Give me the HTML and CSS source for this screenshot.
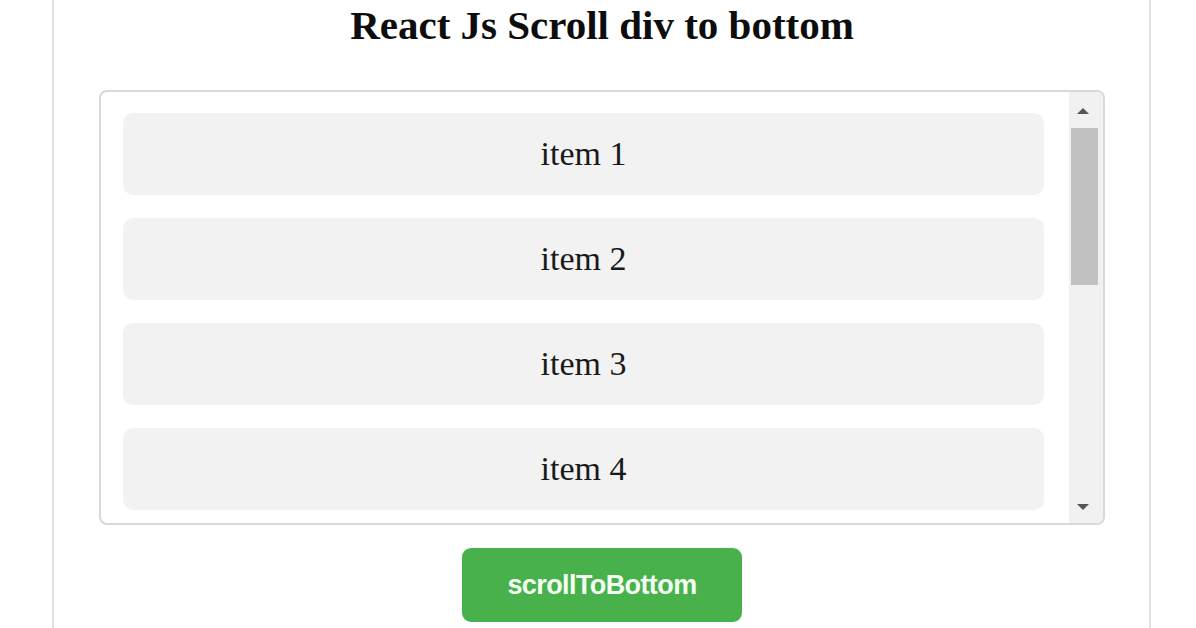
FILE: index.html
```html
<!DOCTYPE html>
<html lang="en">
<head>
<meta charset="utf-8">
<title>React Js Scroll div to bottom</title>
<link rel="stylesheet" href="styles.css">
</head>
<body>
<div class="page">
  <h1 class="title">React Js Scroll div to bottom</h1>
  <div class="scroll-box">
    <div class="list">
      <div class="item">item 1</div>
      <div class="item">item 2</div>
      <div class="item">item 3</div>
      <div class="item">item 4</div>
    </div>
    <div class="scrollbar">
      <span class="arrow up"></span>
      <div class="track"><div class="thumb"></div></div>
      <span class="arrow down"></span>
    </div>
  </div>
  <div class="actions">
    <button class="btn" type="button">scrollToBottom</button>
  </div>
</div>
</body>
</html>
```
FILE: styles.css
```css
html, body {
  margin: 0;
  padding: 0;
  background: #ffffff;
  height: 100%;
  overflow: hidden;
}

.page {
  margin-left: 52px;
  width: 1099px;
  box-sizing: border-box;
  min-height: 100%;
  border-left: 2px solid #e2e2e2;
  border-right: 2px solid #e2e2e2;
  padding: 2px 44px 0 45px;
  font-family: "Liberation Serif", "Times New Roman", serif;
  color: #111;
}

.title {
  margin: 0 0 42px;
  font-size: 41px;
  line-height: 46px;
  font-weight: bold;
  text-align: center;
  color: #0d0d0d;
}

.scroll-box {
  display: flex;
  height: 435px;
  box-sizing: border-box;
  border: 2px solid #d9d9d9;
  border-radius: 8px;
  overflow: hidden;
  background: #fff;
}

.list {
  flex: 1;
  overflow: hidden;
  padding: 21px 25px 0 22px;
  display: flex;
  flex-direction: column;
  gap: 23px;
}

.item {
  flex: none;
  height: 82px;
  border-radius: 10px;
  background: #f2f2f2;
  display: flex;
  align-items: center;
  justify-content: center;
  font-size: 34px;
  color: #1a1a1a;
}

/* drawn scrollbar: arrow buttons, track and thumb */
.scrollbar {
  flex: none;
  width: 34px;
  background: #f1f1f1;
  display: flex;
  flex-direction: column;
  align-items: flex-start;
}

.arrow {
  flex: none;
  width: 0;
  height: 0;
  margin-left: 8px;
  border-left: 6px solid transparent;
  border-right: 6px solid transparent;
}

.arrow.up {
  margin-top: 16px;
  margin-bottom: 14px;
  border-bottom: 6px solid #555;
}

.arrow.down {
  margin-top: 12px;
  margin-bottom: 13px;
  border-top: 6px solid #555;
}

.track {
  flex: 1;
  align-self: stretch;
  padding-left: 2px;
}

.thumb {
  width: 27px;
  height: 157px;
  background: #c1c1c1;
}

.actions {
  display: flex;
  justify-content: center;
  padding-top: 23px;
}

.btn {
  width: 280px;
  height: 74px;
  border: none;
  border-radius: 9px;
  background: #48b14c;
  color: #f2fff2;
  font-family: "Liberation Sans", Arial, sans-serif;
  font-size: 27px;
  line-height: 32px;
  font-weight: bold;
  letter-spacing: -0.6px;
  padding: 0;
}
```
